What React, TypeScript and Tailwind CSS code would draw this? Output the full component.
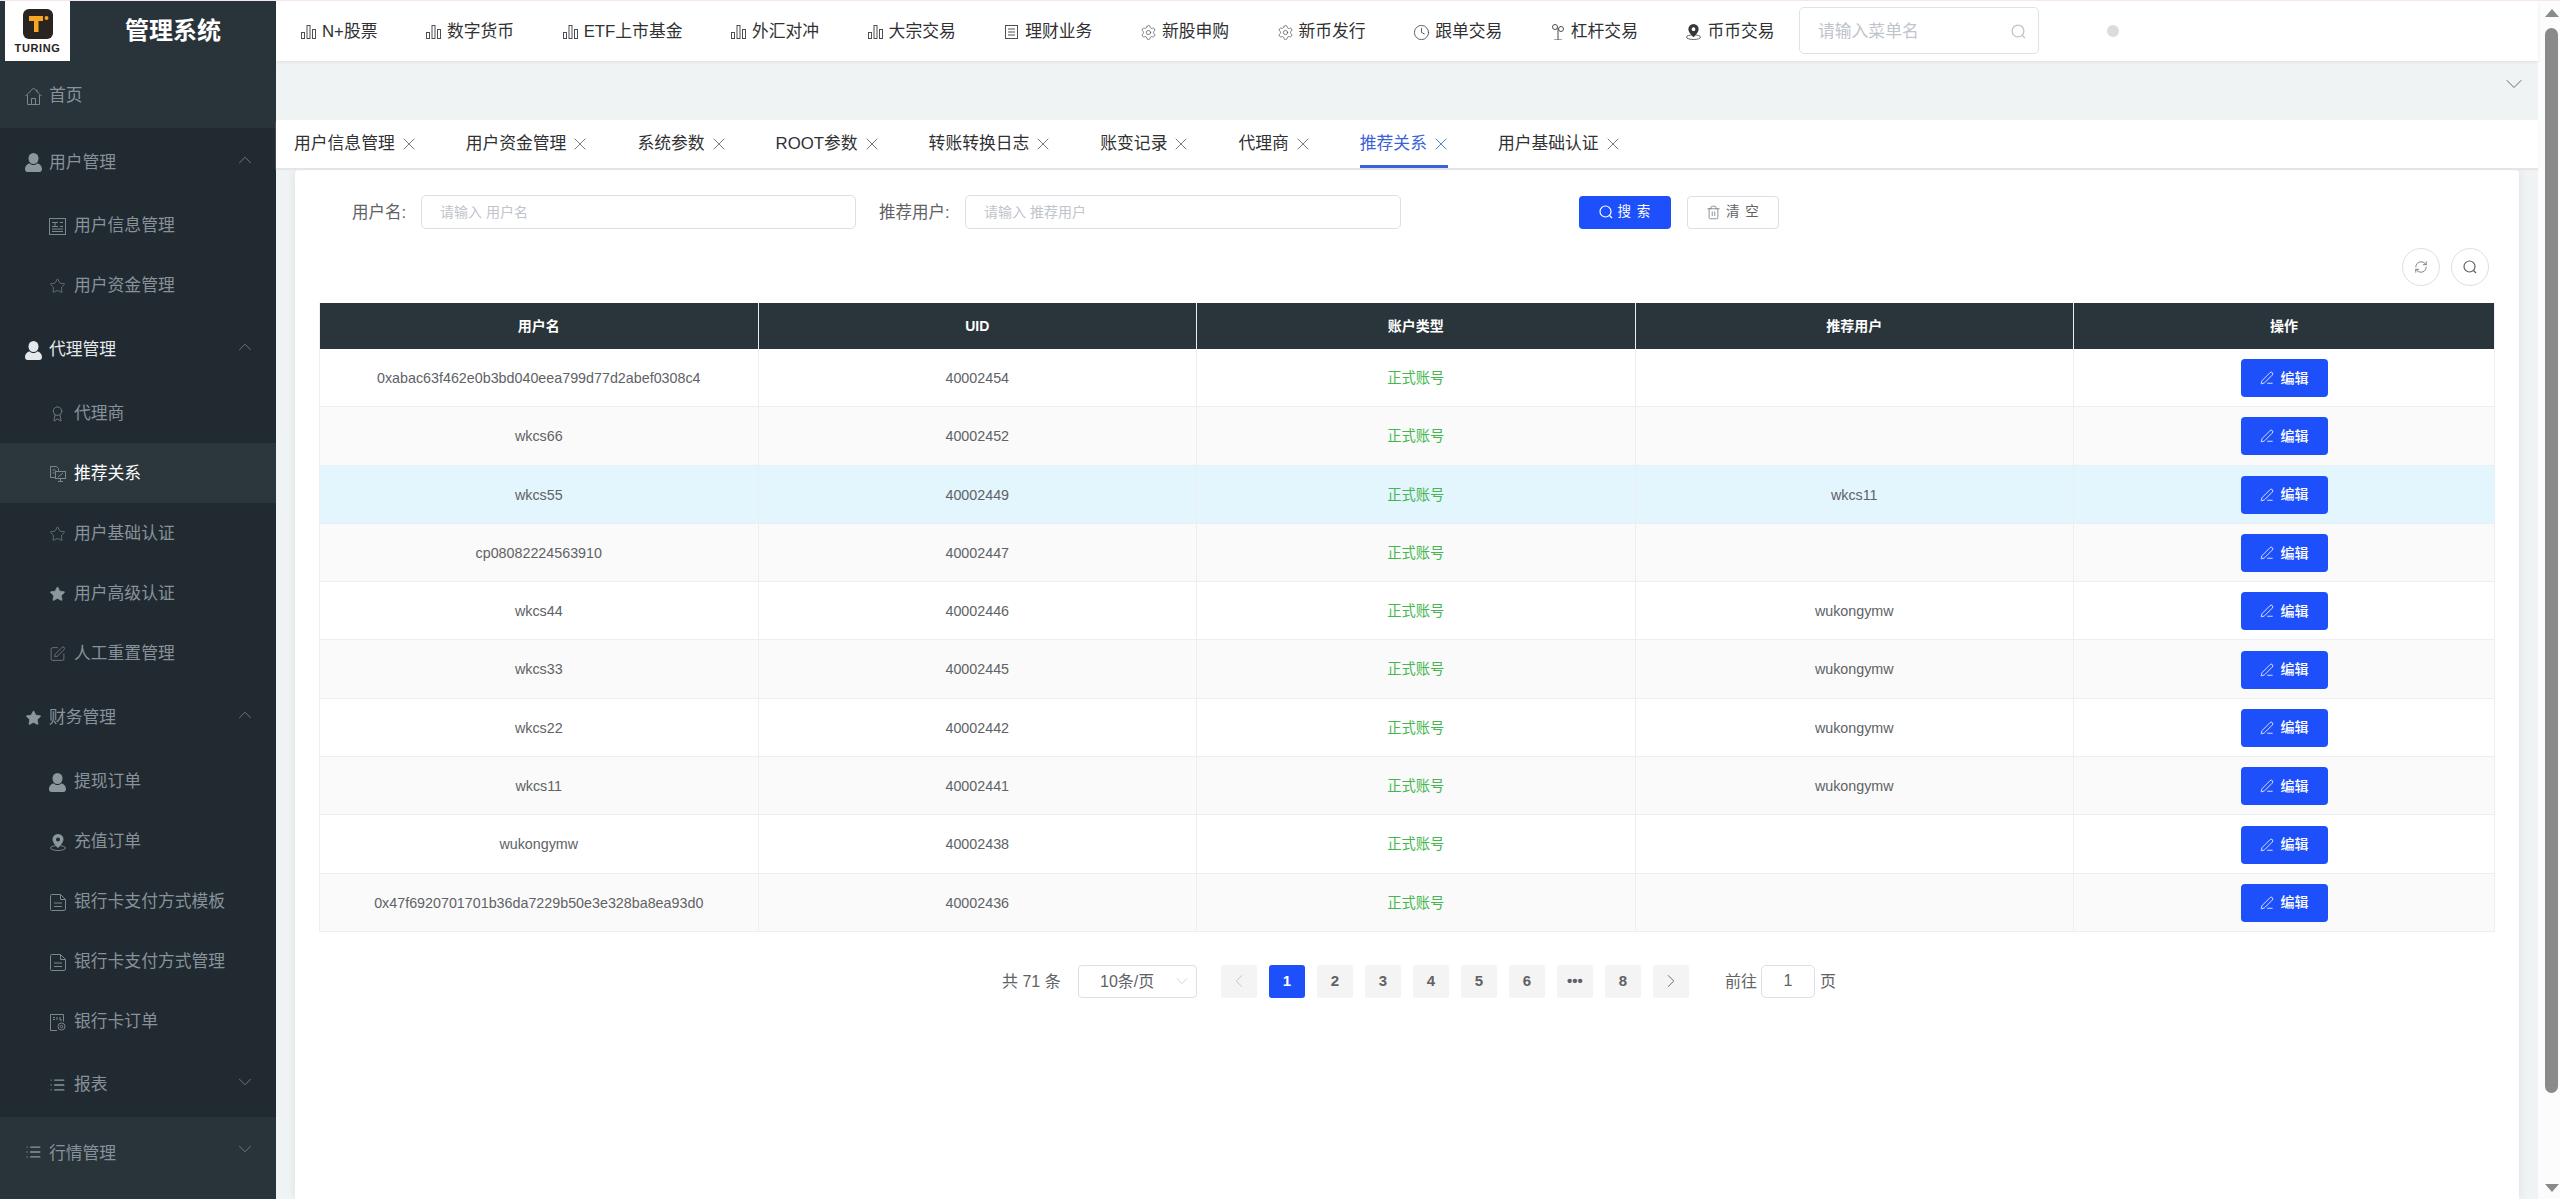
import { Award, ChevronDown, ChevronLeft, ChevronRight, ChevronUp, Clock, List, PenLine, RefreshCw, Settings, SquarePen, Star, Trash2, X } from "lucide-react";
import type { ReactNode } from "react";

const cjk = "font-['Liberation_Sans','Noto_Sans_CJK_SC',sans-serif]";

const Bars = () => (
    <svg width="15" height="14" viewBox="0 0 15 14" fill="none" stroke="#4b5055" strokeWidth="1">
        <rect x="0.5" y="7.5" width="3" height="6" />
        <rect x="6" y="0.5" width="3" height="13" />
        <rect x="11.5" y="4.5" width="3" height="9" />
    </svg>
);

const Search = ({ size = 14, color = "currentColor" }: { size?: number; color?: string }) => (
    <svg width={size} height={size} viewBox="0 0 14 14" fill="none" stroke={color} strokeWidth="1.2">
        <circle cx="6.5" cy="6.5" r="5.5" />
        <path d="M10.5 10.5 13 13" />
    </svg>
);

const UserFill = ({ color }: { color: string }) => (
    <svg width="17" height="19" viewBox="0 0 17 19" fill={color}>
        <ellipse cx="8.5" cy="5.5" rx="5" ry="5.5" />
        <path d="M0 16c0-3.5 3-5.5 5-5.5 1 1 2 1.500 3.500 1.500s2.500-.5 3.500-1.500c2 0 5 2 5 5.500 0 2-1 3-2.500 3h-12C1 19 0 18 0 16z" />
    </svg>
);

const House = () => (
    <svg width="17" height="18" viewBox="0 0 17 18" fill="none" stroke="#7b868d" strokeWidth="1">
        <path d="M.5 9 8.500 1l8 8" />
        <path d="M2.500 8v9.500h12V8" />
        <path d="M6.500 17.500v-6h4v6" />
        <path d="M12 2.500v2.500" />
    </svg>
);

const NewsIcon = () => (
    <svg width="17" height="17" viewBox="0 0 17 17" fill="none" stroke="#7b868d" strokeWidth="1">
        <rect x="0.500" y="0.500" width="16" height="16" />
        <path d="M3 4.500h6M6 4.500v4M3 8.500h6M11 4.500h3M11 8.500h3M3 11h11M3 13.500h11" />
    </svg>
);

const MonitorDoc = () => (
    <svg width="16" height="16" viewBox="0 0 16 16" fill="none" stroke="#7b868d" strokeWidth="1">
        <path d="M5 11.500H.5V.5h6l2 2v2" />
        <path d="M2.500 4h3M2.500 7h2" />
        <rect x="5.500" y="5.500" width="10" height="7" />
        <path d="M10.500 12.500v3M8 15.500h5M8 11l5-4" />
    </svg>
);

const DocIcon = () => (
    <svg width="16" height="17" viewBox="0 0 16 17" fill="none" stroke="#7b868d" strokeWidth="1">
        <path d="M1.500.5h9l5 5v9.500a1.500 1.500 0 0 1-1.500 1.500H1.500A1 1 0 0 1 .5 15.500v-14a1 1 0 0 1 1-1z" />
        <path d="M10.500.5v5h5M4 9h8M4 12.500h8" />
    </svg>
);

const SqlIcon = () => (
    <svg width="16" height="17" viewBox="0 0 16 17" fill="none" stroke="#7b868d" strokeWidth="1">
        <path d="M7 16.500H.5V.5h13v7" />
        <path d="M3 3.500h2M3 5.500h2M7 3v3M10 3v3h2" />
        <circle cx="11.500" cy="12.500" r="3.500" />
        <circle cx="11.500" cy="12.500" r="1.200" />
    </svg>
);

const Pin = ({ color, size = 16 }: { color: string; size?: number }) => (
    <svg width={size} height={size + 1} viewBox="0 0 16 17" fill="none">
        <path fillRule="evenodd" clipRule="evenodd" d="M8 0a5.500 5.500 0 0 1 5.500 5.500C13.500 9 8 14 8 14S2.500 9 2.500 5.500A5.500 5.500 0 0 1 8 0zm0 3.500a2 2 0 1 0 0 4 2 2 0 0 0 0-4z" fill={color} />
        <ellipse cx="8" cy="14" rx="7.500" ry="2.500" stroke={color} strokeWidth="0.800" />
    </svg>
);

const Lever = () => (
    <svg width="14" height="16" viewBox="0 0 14 16" fill="none" stroke="#4b5055" strokeWidth="1">
        <path d="M7 4v12M3 16h8" />
        <circle cx="4" cy="3" r="2.500" />
        <circle cx="10" cy="5" r="2.500" />
    </svg>
);

const LedgerIcon = () => (
    <svg width="15" height="14" viewBox="0 0 15 14" fill="none" stroke="#4b5055" strokeWidth="1">
        <rect x="1.500" y="0.500" width="12" height="13" />
        <path d="M4 4h7M4 7h7M4 10h7" />
    </svg>
);

const subIcon = (c: ReactNode) => <span className="flex w-[17px] justify-center">{c}</span>;
const gray = "#7b868d";

type SideRow = { label: string; icon: ReactNode; kind: "group" | "item"; chevron?: "up" | "down"; h?: string; text?: string; bg?: string };

const sideRows: SideRow[] = [
    { label: "首页", icon: <House />, kind: "group", h: "h-[67px]", bg: "bg-[#29333a]" },
    { label: "用户管理", icon: <UserFill color="#8b969d" />, kind: "group", chevron: "up", h: "h-[67px]" },
    { label: "用户信息管理", icon: <NewsIcon />, kind: "item" },
    { label: "用户资金管理", icon: <Star size={18} strokeWidth={1} color={gray} />, kind: "item" },
    { label: "代理管理", icon: <UserFill color="#e4e8ea" />, kind: "group", chevron: "up", h: "h-[68px]", text: "text-[#e4e8ea]" },
    { label: "代理商", icon: <Award size={18} strokeWidth={1.2} color={gray} />, kind: "item" },
    { label: "推荐关系", icon: <MonitorDoc />, kind: "item", text: "text-white", bg: "bg-[#2c363d]" },
    { label: "用户基础认证", icon: <Star size={18} strokeWidth={1} color={gray} />, kind: "item" },
    { label: "用户高级认证", icon: <Star size={18} strokeWidth={1} color="#8b969d" fill="#8b969d" />, kind: "item" },
    { label: "人工重置管理", icon: <SquarePen size={18} strokeWidth={1.1} color={gray} />, kind: "item" },
    { label: "财务管理", icon: <Star size={18} strokeWidth={1} color="#8b969d" fill="#8b969d" />, kind: "group", chevron: "up", h: "h-[68px]" },
    { label: "提现订单", icon: <UserFill color="#8b969d" />, kind: "item" },
    { label: "充值订单", icon: <Pin color="#8b969d" />, kind: "item" },
    { label: "银行卡支付方式模板", icon: <DocIcon />, kind: "item" },
    { label: "银行卡支付方式管理", icon: <DocIcon />, kind: "item" },
    { label: "银行卡订单", icon: <SqlIcon />, kind: "item" },
    { label: "报表", icon: <List size={20} strokeWidth={1.8} color="#8b969d" />, kind: "item", chevron: "down", h: "h-[66px]" },
];

const Sidebar = () => (
    <aside className="flex w-[276px] shrink-0 flex-col bg-[#212a30]">
        <div className="flex h-[60px] shrink-0 bg-[#29333a] pl-[5px]">
            <div className="flex w-[65px] flex-col items-center bg-white pt-[8px]">
                <svg width="30" height="30" viewBox="0 0 30 30">
                    <rect width="30" height="30" rx="6" fill="#2a2420" />
                    <path d="M6 7h14v5h-4.500v11H11V12H6z" fill="#f5a623" />
                    <circle cx="23.500" cy="9" r="2" fill="#f5a623" />
                </svg>
                <span className="mt-[1px] text-[11px] leading-[16px] font-bold tracking-[0.6px] text-[#2a2420]">TURING</span>
            </div>
            <span className="ml-[55px] text-[24px] leading-[60px] font-bold text-white">管理系统</span>
        </div>
        {sideRows.map((r) => (
            <div
                key={r.label}
                className={`flex shrink-0 items-center pt-[2px] text-[16.8px] ${r.h ?? "h-[60px]"} ${r.kind === "group" ? "pl-[25px]" : "pl-[49px]"} ${r.bg ?? ""} ${r.text ?? "text-[#87929a]"}`}
            >
                {subIcon(r.icon)}
                <span className={r.kind === "group" ? "ml-[7px]" : "ml-[8px]"}>{r.label}</span>
                {r.chevron === "up" && <ChevronUp size={22} strokeWidth={0.8} color="#87929a" className="mr-[20px] mb-[6px] ml-auto" />}
                {r.chevron === "down" && <ChevronDown size={22} strokeWidth={0.8} color="#87929a" className="mr-[20px] mb-[6px] ml-auto" />}
            </div>
        ))}
        <div className="flex flex-1 items-start bg-[#29333a] pt-[24px] pl-[25px] text-[16.8px] text-[#87929a]">
            <span className="flex h-[22px] w-[17px] items-center justify-center"><List size={20} strokeWidth={1.8} color="#8b969d" /></span>
            <span className="ml-[7px]">行情管理</span>
            <ChevronDown size={22} strokeWidth={0.8} color="#87929a" className="-mt-[3px] mr-[20px] ml-auto" />
        </div>
    </aside>
);

const navItems: { label: string; icon: ReactNode }[] = [
    { label: "N+股票", icon: <Bars /> },
    { label: "数字货币", icon: <Bars /> },
    { label: "ETF上市基金", icon: <Bars /> },
    { label: "外汇对冲", icon: <Bars /> },
    { label: "大宗交易", icon: <Bars /> },
    { label: "理财业务", icon: <LedgerIcon /> },
    { label: "新股申购", icon: <span className="-mx-[1px] flex"><Settings size={17} strokeWidth={1} color="#4b5055" /></span> },
    { label: "新币发行", icon: <span className="-mx-[1px] flex"><Settings size={17} strokeWidth={1} color="#4b5055" /></span> },
    { label: "跟单交易", icon: <span className="-mx-[1px] flex"><Clock size={17} strokeWidth={1.1} color="#33383c" /></span> },
    { label: "杠杆交易", icon: <Lever /> },
    { label: "币币交易", icon: <Pin color="#33383c" size={15} /> },
];

const TopBar = () => (
    <div className="relative z-20 flex h-[60px] shrink-0 items-center bg-white pl-[25px] shadow-[0_1px_3px_rgba(0,0,0,0.08)]">
        <div className="flex gap-[48.500px] pt-[2px]">
            {navItems.map((n) => (
                <div key={n.label} className="flex items-center gap-[6px] text-[16.8px] whitespace-nowrap text-[#303133]">
                    {n.icon}
                    <span>{n.label}</span>
                </div>
            ))}
        </div>
        <div className="absolute top-[6px] left-[1523px] flex h-[47px] w-[240px] items-center justify-between rounded-[5px] border border-[#e0e2e6] pt-[2px] pr-[12px] pl-[18px] text-[16.8px] text-[#c0c4cc]">
            <span>请输入菜单名</span>
            <Search size={15} color="#c0c4cc" />
        </div>
        <span className="absolute top-[24px] left-[1831px] h-[12px] w-[12px] rounded-full bg-[#dcdcdc]" />
    </div>
);

const tabs = ["用户信息管理", "用户资金管理", "系统参数", "ROOT参数", "转账转换日志", "账变记录", "代理商", "推荐关系", "用户基础认证"];

const Tabs = () => (
    <div className="relative z-10 flex h-[48px] shrink-0 bg-white pl-[18px] shadow-[0_2px_1px_#e4e4ea]">
        <div className="flex gap-[50px]">
            {tabs.map((t) => {
                const active = t === "推荐关系";
                return (
                    <div
                        key={t}
                        className={`flex h-[48px] items-center gap-[4px] border-b-[3px] pt-[3px] text-[16.8px] whitespace-nowrap ${active ? "border-[#3b62d6] text-[#3b62d6]" : "border-transparent text-[#303133]"}`}
                    >
                        <span>{t}</span>
                        <X size={20} strokeWidth={1} className={`-mr-[3px] ${active ? "text-[#3b62d6]" : "text-[#606266]"}`} />
                    </div>
                );
            })}
        </div>
    </div>
);

const rows = [
    ["0xabac63f462e0b3bd040eea799d77d2abef0308c4", "40002454", ""],
    ["wkcs66", "40002452", ""],
    ["wkcs55", "40002449", "wkcs11"],
    ["cp08082224563910", "40002447", ""],
    ["wkcs44", "40002446", "wukongymw"],
    ["wkcs33", "40002445", "wukongymw"],
    ["wkcs22", "40002442", "wukongymw"],
    ["wkcs11", "40002441", "wukongymw"],
    ["wukongymw", "40002438", ""],
    ["0x47f6920701701b36da7229b50e3e328ba8ea93d0", "40002436", ""],
];

const gridCols = "grid grid-cols-[438.500px_438.500px_438.500px_438.500px_1fr]";
const cell = "flex items-center justify-center border-r border-[#ebeef5] pt-[2px]";

const DataTable = () => (
    <div className="mx-[24px] mt-[17px] border-x border-[#ebeef5] text-center text-[14.300px] text-[#606266]">
        <div className={`${gridCols} h-[46px] bg-[#2a343b] text-[14px] font-bold text-white`}>
            {["用户名", "UID", "账户类型", "推荐用户", "操作"].map((h, i) => (
                <div key={h} className={`flex items-center justify-center ${i < 4 ? "border-r border-[#ebeef5]" : ""}`}>{h}</div>
            ))}
        </div>
        {rows.map((r, i) => (
            <div
                key={r[1]}
                className={`${gridCols} h-[58.300px] border-b border-[#ebeef5] ${i === 2 ? "bg-[#e3f5fd]" : i % 2 === 1 || i === 3 ? "bg-[#fafafa]" : "bg-white"}`}
            >
                <div className={cell}>{r[0]}</div>
                <div className={cell}>{r[1]}</div>
                <div className={`${cell} text-[#45b74f]`}>正式账号</div>
                <div className={cell}>{r[2]}</div>
                <div className="flex items-center justify-center pt-[1px]">
                    <button className="flex h-[38px] w-[87px] items-center justify-center gap-[7px] rounded-[4px] bg-[#1d4ffb] text-[14px] font-medium text-white">
                        <PenLine size={14} strokeWidth={1.4} />
                        编辑
                    </button>
                </div>
            </div>
        ))}
    </div>
);

const pageBtn = "flex h-[33px] w-[36px] items-center justify-center rounded-[3px] text-[15px] font-bold";
const pageIdle = `${pageBtn} bg-[#f4f4f5] text-[#606266]`;

const Pagination = () => (
    <div className="mt-[33px] flex h-[33px] items-center pl-[707px] text-[16px] text-[#606266]">
        <span className="w-[76px] pt-[2px] whitespace-nowrap">共 71 条</span>
        <div className="flex h-[33px] w-[119px] items-center justify-between rounded-[4px] border border-[#dcdfe6] pr-[4px] pl-[21px]">
            <span className="pt-[2px]">10条/页</span>
            <ChevronDown size={20} strokeWidth={0.9} color="#c0c4cc" />
        </div>
        <div className="ml-[24px] flex gap-[12px]">
            <button className={pageIdle}><ChevronLeft size={22} strokeWidth={1} color="#c0c4cc" /></button>
            <button className={`${pageBtn} bg-[#1d4ffb] text-white`}>1</button>
            {["2", "3", "4", "5", "6", "•••", "8"].map((p) => (
                <button key={p} className={p === "•••" ? `${pageIdle} text-[9px]` : pageIdle}>{p}</button>
            ))}
            <button className={pageIdle}><ChevronRight size={22} strokeWidth={1} color="#606266" /></button>
        </div>
        <span className="ml-[36px] pt-[2px]">前往</span>
        <div className="ml-[4px] flex h-[33px] w-[54px] items-center justify-center rounded-[5px] border border-[#dcdfe6]">1</div>
        <span className="ml-[5px] pt-[2px]">页</span>
    </div>
);

const Panel = () => (
    <div className="mx-[19px] mt-[2px] flex-1 rounded-t-[4px] bg-white pt-[25px] shadow-[0_0_10px_rgba(0,0,0,0.08)]">
        <div className="flex h-[34px] items-center text-[16.500px] text-[#606266]">
            <span className="ml-[57px] w-[54px] whitespace-nowrap">用户名:</span>
            <div className="ml-[15px] flex h-[34px] w-[435px] items-center rounded-[5px] border border-[#dcdfe6] pl-[18px] text-[14px] text-[#c0c4cc]">请输入 用户名</div>
            <span className="ml-[23px] w-[72px] whitespace-nowrap">推荐用户:</span>
            <div className="ml-[14px] flex h-[34px] w-[436px] items-center rounded-[5px] border border-[#dcdfe6] pl-[18px] text-[14px] text-[#c0c4cc]">请输入 推荐用户</div>
            <button className="ml-[178px] flex h-[33px] w-[92px] items-center justify-center gap-[5px] rounded-[4px] bg-[#1d4ffb] text-[13.500px] tracking-[1px] text-white">
                <Search size={14} color="#fff" />
                搜 索
            </button>
            <button className="ml-[16px] flex h-[33px] w-[92px] items-center justify-center gap-[5px] rounded-[4px] border border-[#dcdfe6] bg-white text-[13.500px] tracking-[1px] text-[#606266]">
                <Trash2 size={15} strokeWidth={1.1} />
                清 空
            </button>
        </div>
        <div className="mt-[19px] flex justify-end gap-[11px] pr-[30px]">
            <button className="flex h-[38px] w-[38px] items-center justify-center rounded-full border border-[#dcdfe6] text-[#606266]"><RefreshCw size={14} strokeWidth={1.3} /></button>
            <button className="flex h-[38px] w-[38px] items-center justify-center rounded-full border border-[#dcdfe6]"><Search size={14} color="#606266" /></button>
        </div>
        <DataTable />
        <Pagination />
    </div>
);

const ScrollBar = () => (
    <div className="flex w-[22px] shrink-0 flex-col items-center bg-[#fcfcfc] pl-[5px]">
        <span className="mt-[8px] h-0 w-0 border-x-[7.500px] border-b-[8px] border-x-transparent border-b-[#8a8a8a]" />
        <span className="mt-[11px] h-[1065px] w-[13px] rounded-full bg-[#8a8a8a]" />
        <span className="mt-[91px] h-0 w-0 border-x-[7.500px] border-t-[8px] border-x-transparent border-t-[#8a8a8a]" />
    </div>
);

export default function App() {
    return (
        <div className={`flex h-[1199px] w-[2560px] overflow-hidden border-t border-[#f4e6ec] ${cjk}`}>
            <Sidebar />
            <main className="flex min-w-0 flex-1 flex-col bg-[#eff3f4]">
                <TopBar />
                <div className="flex h-[59px] shrink-0 items-start justify-end pt-[9px] pr-[10px]">
                    <ChevronDown size={28} strokeWidth={0.8} color="#606266" />
                </div>
                <Tabs />
                <Panel />
            </main>
            <ScrollBar />
        </div>
    );
}
